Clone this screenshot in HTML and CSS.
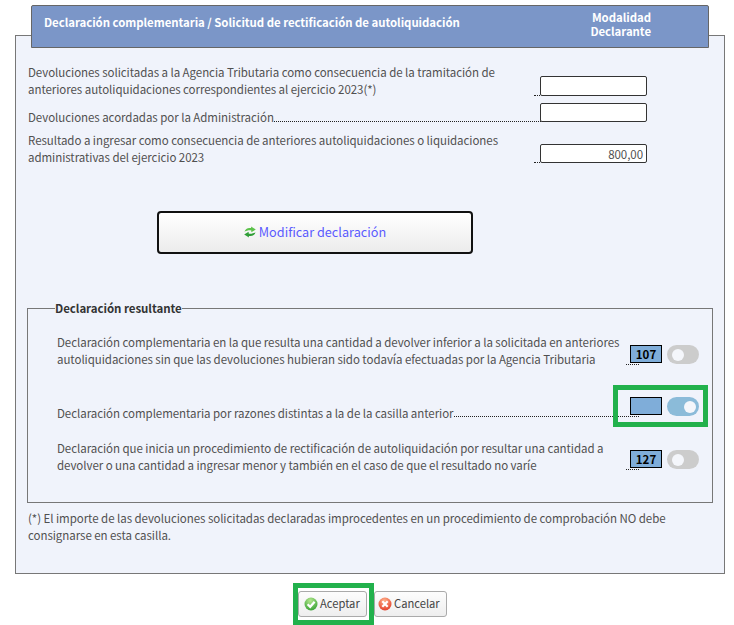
FILE: index.html
```html
<!DOCTYPE html>
<html lang="es">
<head>
<meta charset="utf-8">
<title>Declaración complementaria</title>
<link rel="stylesheet" href="styles.css">
</head>
<body>
<main class="page">
  <header class="head">
    <h1 class="head-title">Declaración complementaria / Solicitud de rectificación de autoliquidación</h1>
    <div class="head-side">Modalidad<br>Declarante</div>
  </header>
  <section class="panel">
    <div class="amounts">
      <div class="amount">
        <label class="amount-label wide">Devoluciones solicitadas a la Agencia Tributaria como consecuencia de la tramitación de anteriores autoliquidaciones correspondientes al ejercicio 2023(*)</label>
        <span class="leader"></span>
        <input class="amount-input" type="text">
      </div>
      <div class="amount second">
        <label class="amount-label">Devoluciones acordadas por la Administración</label>
        <span class="leader over"></span>
        <input class="amount-input" type="text">
      </div>
      <div class="amount third">
        <label class="amount-label wide">Resultado a ingresar como consecuencia de anteriores autoliquidaciones o liquidaciones administrativas del ejercicio 2023</label>
        <span class="leader"></span>
        <input class="amount-input" type="text" value="800,00">
      </div>
    </div>
    <div class="modify-wrap">
      <button class="modify" type="button">
        <svg class="modify-icon" viewBox="0 0 12 12" width="12" height="12" aria-hidden="true">
          <path d="M.5 5.800C1.300 2.800 3.700 1.500 7.200 2.100L7 .4 11.800 3.400 7.400 6.200 7.300 4.500C5 4 3 4.500.5 5.800Z" fill="#5cc24a"/>
          <path d="M11.500 6.200C10.700 9.200 8.300 10.500 4.800 9.900L5 11.600.2 8.600 4.600 5.800 4.700 7.500C7 8 9 7.500 11.500 6.200Z" fill="#2f9e36"/>
        </svg>
        Modificar declaración
      </button>
    </div>
    <fieldset class="result">
      <legend class="result-legend">Declaración resultante</legend>
      <div class="option">
        <p class="option-text">Declaración complementaria en la que resulta una cantidad a devolver inferior a la solicitada en anteriores autoliquidaciones sin que las devoluciones hubieran sido todavía efectuadas por la Agencia Tributaria</p>
        <span class="option-leader"></span>
        <span class="code">107</span>
        <span class="switch"><span class="knob"></span></span>
      </div>
      <div class="option middle">
        <p class="option-text">Declaración complementaria por razones distintas a la de la casilla anterior</p>
        <span class="option-leader"></span>
        <span class="code"></span>
        <span class="switch on"><span class="knob"></span></span>
        <span class="mark"></span>
      </div>
      <div class="option last">
        <p class="option-text">Declaración que inicia un procedimiento de rectificación de autoliquidación por resultar una cantidad a devolver o una cantidad a ingresar menor y también en el caso de que el resultado no varíe</p>
        <span class="option-leader"></span>
        <span class="code">127</span>
        <span class="switch"><span class="knob"></span></span>
      </div>
    </fieldset>
    <p class="note">(*) El importe de las devoluciones solicitadas declaradas improcedentes en un procedimiento de comprobación NO debe consignarse en esta casilla.</p>
  </section>
  <footer class="actions">
    <span class="accept-mark">
      <button class="action accept" type="button">
        <svg viewBox="0 0 14 14" width="14" height="14" aria-hidden="true">
          <defs><radialGradient id="g" cx=".45" cy=".25" r=".85"><stop offset="0" stop-color="#b4e88e"/><stop offset="1" stop-color="#2b9a2b"/></radialGradient></defs>
          <circle cx="7" cy="7" r="6.500" fill="url(#g)"/>
          <path d="M3.600 7.200 6.200 9.800 10.600 4.700" fill="none" stroke="#fff" stroke-width="2.200"/>
        </svg>
        Aceptar
      </button>
    </span>
    <button class="action cancel" type="button">
      <svg viewBox="0 0 14 14" width="14" height="14" aria-hidden="true">
        <defs><radialGradient id="r" cx=".45" cy=".25" r=".85"><stop offset="0" stop-color="#ffb08a"/><stop offset="1" stop-color="#e0321f"/></radialGradient></defs>
        <circle cx="7" cy="7" r="6.500" fill="url(#r)"/>
        <path d="M4.300 4.300 9.700 9.700M9.700 4.300 4.300 9.700" fill="none" stroke="#fff" stroke-width="2.200"/>
      </svg>
      Cancelar
    </button>
  </footer>
</main>
</body>
</html>
```
FILE: styles.css
```css
* { box-sizing: border-box; }
html, body { margin: 0; padding: 0; background: #fff; }
body {
  height: 625px;
  overflow: hidden;
  font-family: "Noto Sans CJK SC", "Noto Sans", sans-serif;
  font-size: 11.500px;
  letter-spacing: -.05px;
  color: #505050;
}
.page { width: 734px; padding-top: 5px; }

.head {
  position: relative;
  z-index: 1;
  display: flex;
  align-items: center;
  justify-content: space-between;
  width: 678px;
  height: 43px;
  margin: 0 0 -13px 31px;
  padding: 0 57px 8px 12px;
  background: #7b96c8;
  border: 1px solid #666;
  border-radius: 2px 2px 0 0;
  color: #fff;
  font-weight: 700;
  font-size: 11.400px;
  letter-spacing: -.03px;
}
.head-title { margin: 0; font: inherit; line-height: 15px; }
.head-side { padding-top: 3px; text-align: right; line-height: 14px; }

.panel {
  width: 710px;
  height: 539px;
  margin-left: 15px;
  padding: 26px 12px 0 12px;
  background: #f0f3fb;
  border: 1px solid #777;
}

.amounts { display: flex; flex-direction: column; }
.amount { display: flex; align-items: flex-end; width: 619px; height: 34px; line-height: 17px; }
.amount.second { height: 26px; }
.amount.third { height: 34px; margin-top: 7px; }
.amount-label { display: block; flex: none; margin-bottom: -2px; }
.second .amount-label { margin-bottom: -4px; }
.third .amount-label { margin-bottom: -3px; }
.amount-label.wide { width: 506px; }
.leader { flex: 1 1 0; height: 1px; border-bottom: 1px dotted #222; }
.leader.over { margin-right: -7px; }
.amount-input {
  position: relative;
  flex: none;
  width: 107px;
  height: 20px;
  padding: 0 3px;
  border: 1px solid #333;
  border-radius: 2px;
  background: #fff;
  font: inherit;
  letter-spacing: inherit;
  color: #505050;
  text-align: right;
}
.second .amount-input, .third .amount-input { height: 19px; }

.modify-wrap { display: flex; margin: 48px 0 0 129px; }
.modify {
  display: flex;
  align-items: center;
  justify-content: center;
  gap: 3px;
  width: 316px;
  height: 43px;
  padding: 0 0 2px;
  border: 2px solid #111;
  border-radius: 4px;
  background: linear-gradient(#fff, #ececec);
  font-family: inherit;
  font-size: 12.700px;
  letter-spacing: 0;
  color: #5a5aff;
}

.result {
  width: 686px;
  height: 203px;
  margin: 46px 0 0 -1px;
  padding: 16px 0 0 29px;
  border: 1px solid #777;
}
.result-legend {
  margin-left: -2px;
  padding: 0;
  font-weight: 700;
  line-height: 17px;
  color: #333;
}
.option { position: relative; display: flex; align-items: flex-end; width: 642px; height: 34px; line-height: 17px; }
.option.middle { height: 22px; margin-top: 31px; }
.option.last { margin-top: 18px; }
.option-text { flex: none; width: 569px; margin: 0 0 -1px; }
.middle .option-text { width: auto; margin-bottom: -2px; }
.last .option-text { margin-bottom: -2px; }
.option-leader { flex: 1 1 0; height: 1px; margin: 0 -9px 2px 0; border-bottom: 1px dotted #222; }
.code {
  position: relative;
  flex: none;
  width: 32px;
  height: 18px;
  margin-bottom: 4px;
  border: 1px solid #000;
  background: #7fadd9;
  color: #000;
  font-weight: 700;
  font-size: 11.500px;
  letter-spacing: 0;
  line-height: 17px;
  text-align: center;
}
.switch {
  flex: none;
  display: flex;
  align-items: center;
  width: 32px;
  height: 19px;
  margin: 0 0 3px 5px;
  padding: 0 3px 0 5px;
  border-radius: 10px;
  background: #ccc;
}
.switch.on { justify-content: flex-end; background: #8bbbd9; }
.knob { width: 12px; height: 12px; border-radius: 50%; background: #f4f6fb; }
.middle .option-leader { margin-bottom: 3px; }
.middle .code { margin-bottom: 5px; }
.middle .switch { margin-bottom: 4px; }
.mark {
  position: absolute;
  left: 556px;
  top: -13px;
  width: 95px;
  height: 42px;
  border: 5px solid #22b14c;
}

.note { margin: 7px 0 0 0; width: 670px; line-height: 17px; }

.actions { display: flex; align-items: flex-start; margin-top: 9px; padding-left: 293px; }
.accept-mark {
  display: block;
  padding: 3px 2px 3px 0;
  border: 5px solid #22b14c;
}
.action {
  display: flex;
  align-items: center;
  gap: 2px;
  height: 26px;
  padding: 0 0 3px 5px;
  border: 1px solid #aaa;
  border-radius: 3px;
  background: linear-gradient(#fdfdfd, #eee);
  font-family: inherit;
  font-size: 11.200px;
  letter-spacing: 0;
  color: #444;
}
.action svg { margin-top: 3px; }
.accept { width: 69px; }
.cancel { width: 73px; margin-top: 8px; padding-left: 3px; }
```
